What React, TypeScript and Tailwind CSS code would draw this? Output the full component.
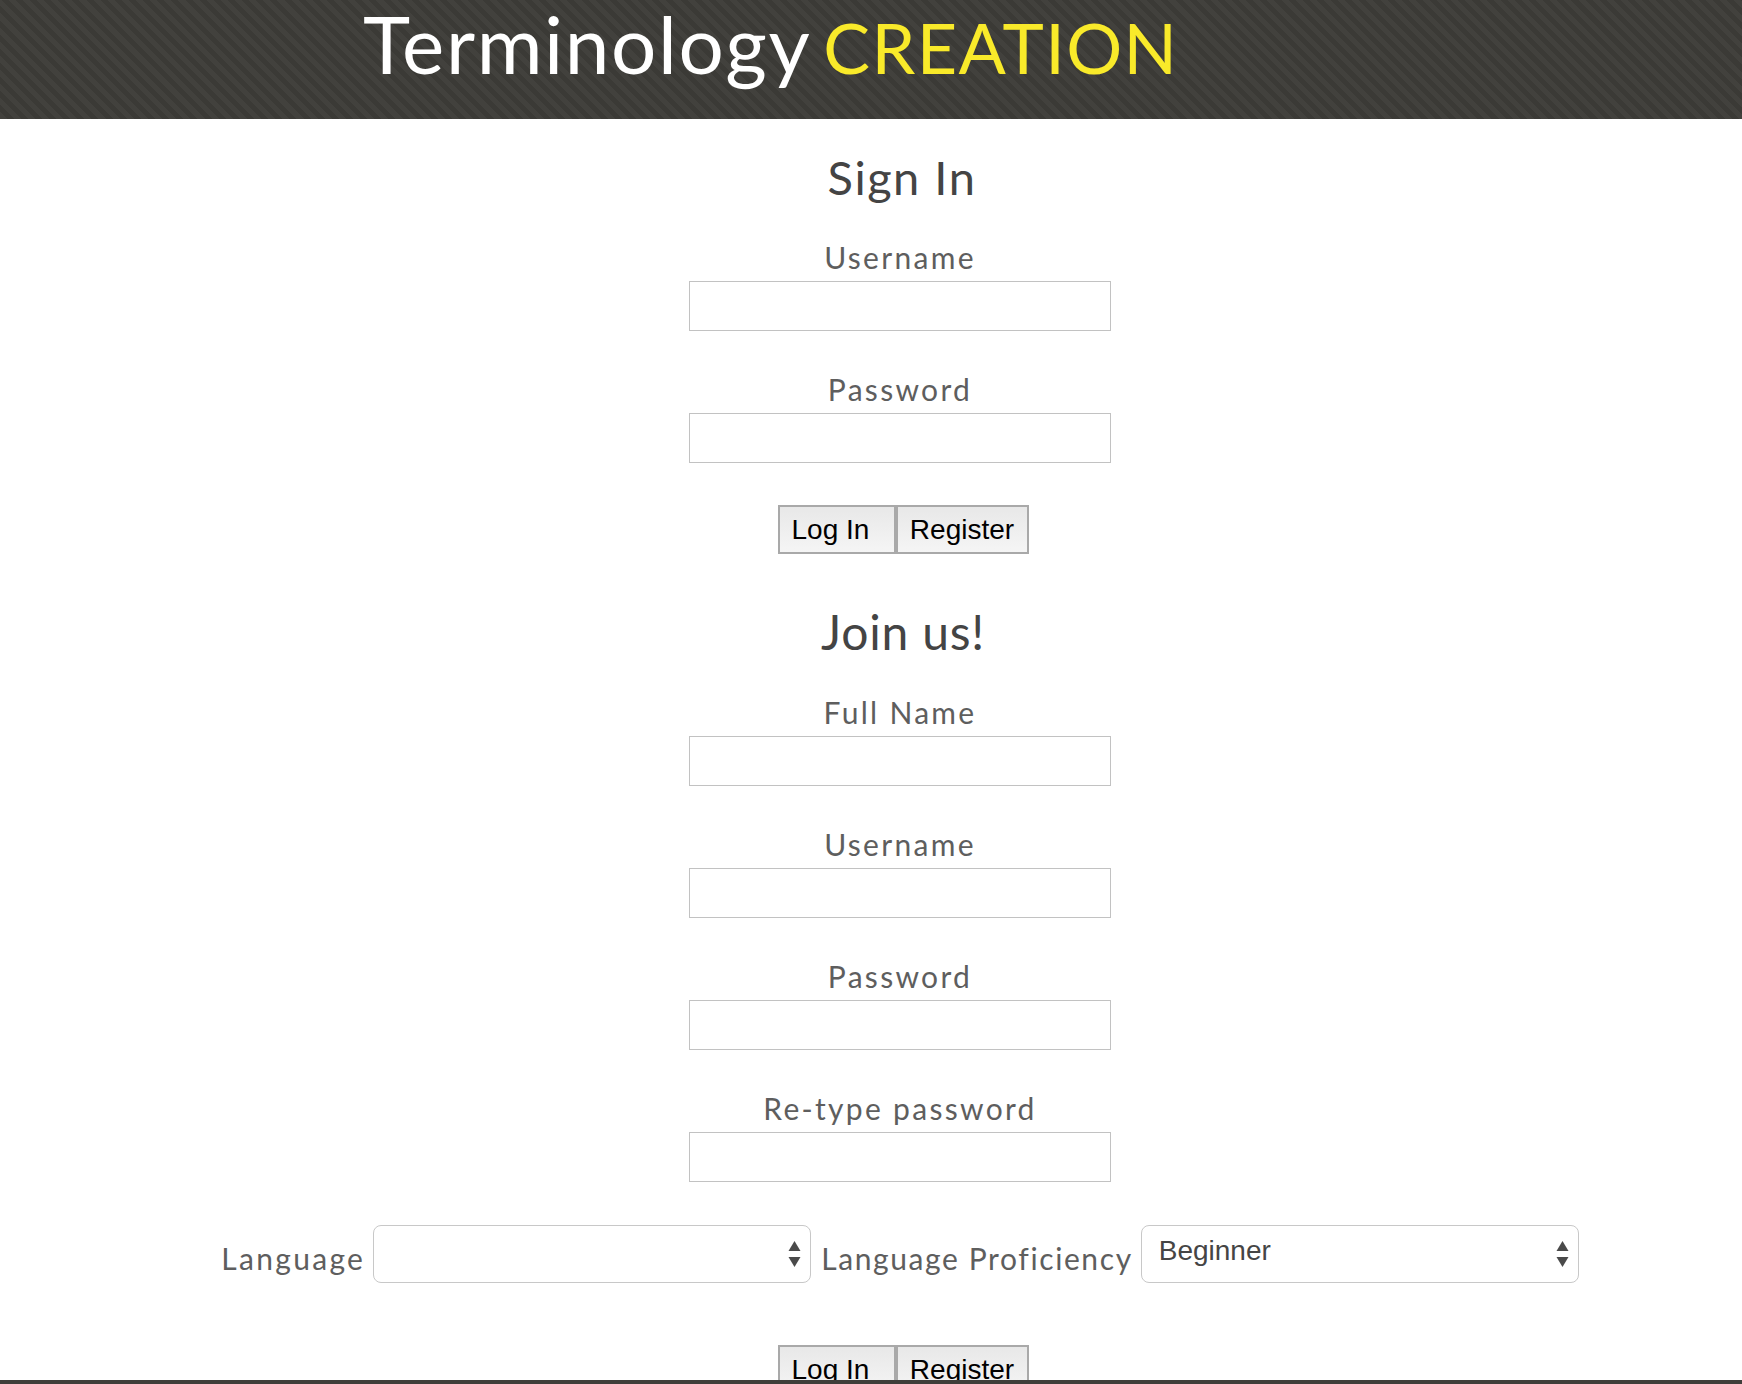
import React from "react";

const labelCls =
  "block h-[29px] text-[30px] leading-[29px] text-[#5e5e5e] text-center tracking-[2.3px]";
const inputCls =
  "mt-[9px] block w-[422px] h-[50px] border border-[#c2c2c2] bg-white";
const fontQ = { fontFamily: "Lato, 'Open Sans', sans-serif" };
const fontH = { fontFamily: "'Liberation Sans', Arial, sans-serif" };

function Field({ label, first }: { label: string; first?: boolean }) {
  return (
    <div className={first ? "flex flex-col items-center" : "flex flex-col items-center mt-[44px]"}>
      <span className={labelCls}>{label}</span>
      <div className={inputCls} />
    </div>
  );
}

function Buttons() {
  return (
    <div className="flex ml-[6px]" style={fontH}>
      <div className="w-[118px] h-[49px] border-2 border-[#a9a9a9] bg-gradient-to-b from-[#e8e8e8] to-[#f5f5f5] flex items-center justify-start pl-[12px] text-[28px] leading-none text-black">
        Log In
      </div>
      <div className="w-[133px] h-[49px] border-2 border-[#a9a9a9] bg-gradient-to-b from-[#e8e8e8] to-[#f5f5f5] flex items-center justify-center text-[28px] leading-none text-black">
        Register
      </div>
    </div>
  );
}

function Arrows() {
  return (
    <svg width="13" height="28" viewBox="0 0 13 28" className="shrink-0">
      <path d="M6.5 1 L12.5 11 L0.5 11 Z" fill="#4a4a4a" />
      <path d="M6.5 27 L12.5 17 L0.5 17 Z" fill="#4a4a4a" />
    </svg>
  );
}

function Select({ value }: { value?: string }) {
  return (
    <div
      className="w-[438px] h-[58px] rounded-[8px] border border-[#c8c8c8] bg-white flex items-center justify-between pl-[17px] pr-[9px]"
      style={fontH}
    >
      <span className="text-[28px] leading-none text-[#454545] -mt-[6px]">{value ?? ""}</span>
      <Arrows />
    </div>
  );
}

export default function App() {
  return (
    <div className="min-h-screen bg-white" style={fontQ}>
      <header className="h-[119px] bg-[#403f3b] bg-[repeating-linear-gradient(45deg,#42413d_0px,#42413d_5px,#3b3a36_5px,#3b3a36_10px)] pl-[363px] flex items-start">
        <div className="flex items-baseline">
          <span className="text-[80px] leading-[86px] text-white tracking-[1.6px]">Terminology</span>
          <span className="ml-[12px] text-[70px] leading-[86px] text-[#f9ea2a] tracking-[1.4px]">CREATION</span>
        </div>
      </header>

      <main className="pl-[58px] flex flex-col items-center">
        <h1 className="mt-[35px] h-[47px] text-[47px] leading-[47px] text-[#444] tracking-[1.5px] ml-[4px]">Sign In</h1>
        <div className="mt-[42px] flex flex-col items-center">
          <Field label="Username" first />
          <Field label="Password" />
        </div>
        <div className="mt-[42px]">
          <Buttons />
        </div>

        <h1 className="mt-[54px] h-[48px] text-[48px] leading-[48px] text-[#444] tracking-[0.8px] ml-[6px]">Join us!</h1>
        <div className="mt-[42px] flex flex-col items-center">
          <Field label="Full Name" first />
          <Field label="Username" />
          <Field label="Password" />
          <Field label="Re-type password" />
        </div>

        <div className="mt-[43px] flex items-center gap-[8px]">
          <span className="text-[30px] leading-[29px] text-[#5e5e5e] tracking-[2.3px] mt-[9px]">Language</span>
          <Select />
          <span className="ml-[2px] text-[30px] leading-[29px] text-[#5e5e5e] tracking-[1.6px] mt-[9px]">Language Proficiency</span>
          <Select value="Beginner" />
        </div>

        <div className="mt-[62px] mb-[40px]">
          <Buttons />
        </div>
      </main>

      <div className="fixed bottom-0 left-0 right-0 h-[4px] bg-[#3f3e3a]" />
    </div>
  );
}
